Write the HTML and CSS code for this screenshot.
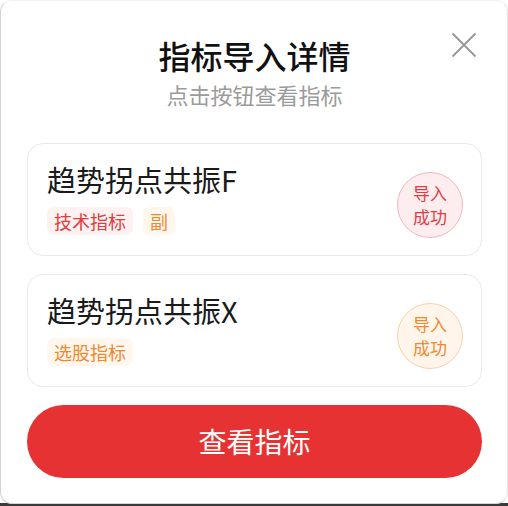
FILE: index.html
```html
<!DOCTYPE html>
<html lang="zh-CN">
<head>
<meta charset="utf-8">
<title>指标导入详情</title>
<link rel="stylesheet" href="styles.css">
</head>
<body>
<div class="dialog">
  <button class="close" aria-label="关闭">
    <svg width="26" height="26" viewBox="0 0 26 26"><path d="M1.5 1.5 L24.5 24.5 M24.5 1.5 L1.5 24.5" stroke="#9a9a9a" stroke-width="2" fill="none"/></svg>
  </button>
  <h1 class="title">指标导入详情</h1>
  <p class="subtitle">点击按钮查看指标</p>
  <div class="list">
    <div class="card">
      <div class="info">
        <div class="name">趋势拐点共振F</div>
        <div class="tags">
          <span class="tag tag-red">技术指标</span>
          <span class="tag tag-orange">副</span>
        </div>
      </div>
      <div class="badge badge-red">导入<br>成功</div>
    </div>
    <div class="card">
      <div class="info">
        <div class="name">趋势拐点共振X</div>
        <div class="tags">
          <span class="tag tag-orange">选股指标</span>
        </div>
      </div>
      <div class="badge badge-orange">导入<br>成功</div>
    </div>
  </div>
  <button class="primary">查看指标</button>
</div>
</body>
</html>
```
FILE: styles.css
```css
html, body {
  margin: 0;
  padding: 0;
}
body {
  width: 508px;
  height: 506px;
  background: linear-gradient(#ffffff 0 503px, #3a3a3a 503px);
  font-family: "Noto Sans CJK SC", "Noto Sans", sans-serif;
  overflow: hidden;
}
.dialog {
  position: relative;
  box-sizing: border-box;
  width: 508px;
  height: 504px;
  background: #fff;
  border: 1px solid #d4d4d4;
  border-top-color: #f2f2f2;
  border-right-color: #e6e6e6;
  border-radius: 12px;
  padding: 32px 25px 0 26px;
  display: flex;
  flex-direction: column;
}
.close {
  position: absolute;
  top: 31px;
  left: 450px;
  width: 26px;
  height: 26px;
  padding: 0;
  border: 0;
  background: none;
  display: block;
}
.close svg { display: block; }
.title {
  margin: 0;
  text-align: center;
  font-size: 32px;
  line-height: 44px;
  font-weight: 500;
  color: #111;
}
.subtitle {
  margin: 2px 0 0;
  text-align: center;
  font-size: 22px;
  line-height: 30px;
  color: #9b9b9b;
}
.list {
  margin-top: 34px;
  display: flex;
  flex-direction: column;
  gap: 18px;
}
.card {
  box-sizing: border-box;
  height: 113px;
  border: 1px solid #e9e9e9;
  border-radius: 16px;
  padding: 17px 18px 0 19px;
  display: flex;
  justify-content: space-between;
  align-items: flex-start;
}
.name {
  font-size: 29px;
  line-height: 36px;
  color: #1a1a1a;
}
.tags {
  margin-top: 10px;
  display: flex;
  gap: 10px;
}
.tag {
  display: inline-block;
  height: 28px;
  line-height: 28px;
  padding: 0 7px;
  border-radius: 7px;
  font-size: 18px;
}
.tag-red {
  background: #fdf1f1;
  color: #e03c3c;
}
.tag-orange {
  background: #fff6ee;
  color: #ee8a2c;
}
.badge {
  box-sizing: border-box;
  width: 66px;
  height: 66px;
  margin-top: 11px;
  border-radius: 50%;
  display: flex;
  align-items: center;
  justify-content: center;
  text-align: center;
  font-size: 17px;
  line-height: 24px;
}
.badge-red {
  background: #fdedef;
  border: 1px solid #f1b8bd;
  color: #e03c3f;
}
.badge-orange {
  background: #fff5eb;
  border: 1px solid #f6d2ab;
  color: #ee8a2c;
}
.primary {
  margin-top: 18px;
  height: 73px;
  border: 0;
  border-radius: 37px;
  background: #e63233;
  color: #fff;
  font-family: inherit;
  font-size: 28px;
  line-height: 73px;
  padding: 0;
}
```
